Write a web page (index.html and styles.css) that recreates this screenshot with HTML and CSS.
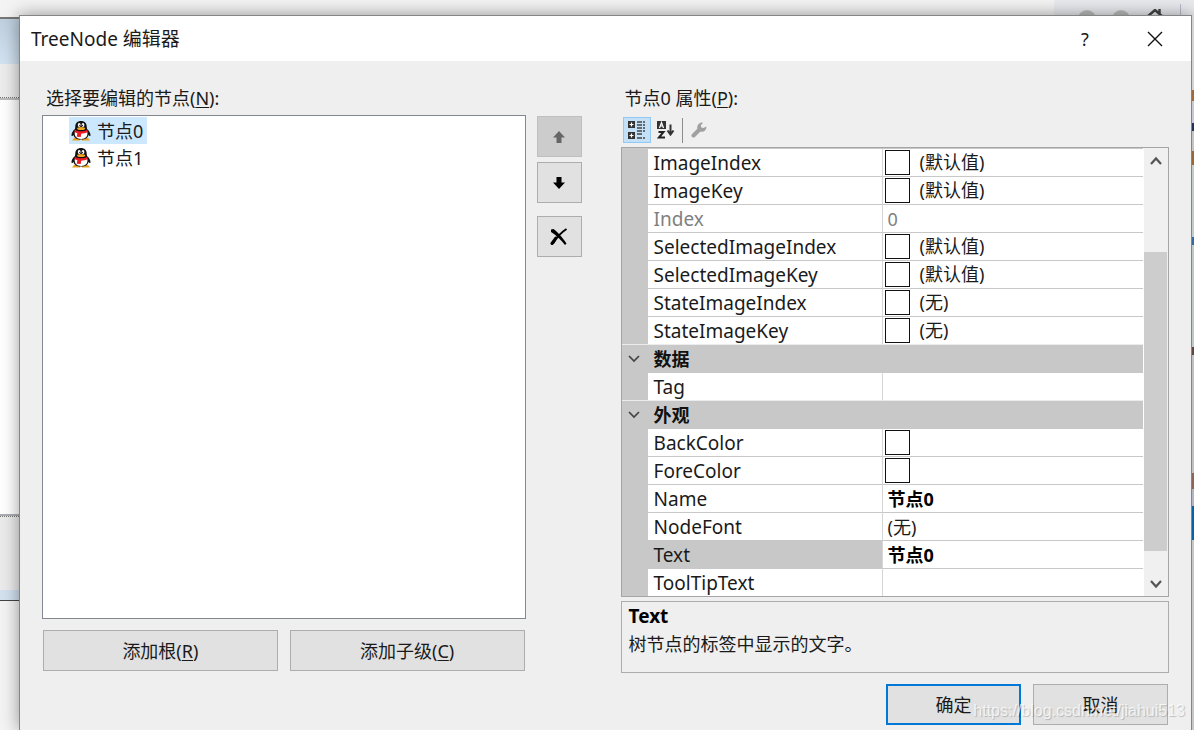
FILE: index.html
```html
<!DOCTYPE html>
<html lang="zh-CN">
<head>
<meta charset="utf-8">
<title>TreeNode 编辑器</title>
<link rel="stylesheet" href="styles.css">
</head>
<body>
<svg class="defs" aria-hidden="true">
  <symbol id="penguin" viewBox="0 0 20 20">
    <path d="M3 17 1 19.500h8v-2.500zM17 17l2 2.500h-8v-2.500z" fill="#e9a21c"/>
    <path d="M10 0C6.500 0 4.300 2.200 4.300 5.500L4 8C2 9.500.2 12 .5 14.500c.2 1 1.400.4 2.100-.6C3 17 6 18.500 10 18.500S17 17 17.400 13.900c.7 1 1.900 1.600 2.100.6.300-2.500-1.500-5-3.500-6.500L15.700 5.500C15.700 2.200 13.500 0 10 0z" fill="#111"/>
    <path d="M3.800 11h12.500c.8 4-1.500 7-6.200 7s-7-3-6.300-7z" fill="#fff"/>
    <ellipse cx="8.200" cy="4" rx="1.400" ry="2" fill="#fff"/><ellipse cx="12" cy="4" rx="1.400" ry="2" fill="#fff"/>
    <circle cx="8.700" cy="4.300" r=".6"/><circle cx="11.500" cy="4.300" r=".6"/>
    <ellipse cx="10.100" cy="7.600" rx="4" ry="1.500" fill="#f0a51e"/>
    <path d="M4 8.800c3.500 2 8.500 2 12.200 0l.6 2.200c-2 1.300-4.600 1.700-6.600 1.700l-.5 3.300-4-.2.700-3.600c-1-.2-2-.6-3-1.200z" fill="#ed1c24"/>
  </symbol>
</svg>
<div class="desktop">
  <div class="back-top">
    <div class="back-tools">
      <i class="dot"></i><i class="dot"></i>
      <svg width="18" height="10" viewBox="0 0 18 10"><path d="M1 8 9 1l8 7M13.500 4V0" fill="none" stroke="#444" stroke-width="2.500"/></svg>
      <i class="rule"></i>
    </div>
  </div>
  <div class="back-left">
    <div class="bl-title"></div>
    <div class="bl-menu"></div>
    <div class="bl-page"></div>
    <div class="bl-foot"></div>
    <div class="bl-edge"></div>
  </div>
  <main class="dialog">
    <header class="titlebar">
      <h1>TreeNode 编辑器</h1>
      <button class="caption" aria-label="帮助">?</button>
      <button class="caption" aria-label="关闭"><svg width="16" height="16" viewBox="0 0 16 16"><path d="M1 1l14 14M15 1 1 15" stroke="#111" stroke-width="1.400"/></svg></button>
    </header>
    <div class="content">
      <section class="nodes">
        <h2 class="label">选择要编辑的节点(<u>N</u>):</h2>
        <ul class="tree">
          <li><button class="node selected"><svg width="20" height="20"><use href="#penguin"/></svg>节点0</button></li>
          <li><button class="node"><svg width="20" height="20"><use href="#penguin"/></svg>节点1</button></li>
        </ul>
        <div class="add-row">
          <button class="btn">添加根(<u>R</u>)</button>
          <button class="btn">添加子级(<u>C</u>)</button>
        </div>
      </section>
      <div class="moves">
        <button class="btn square" disabled aria-label="上移"><svg width="14" height="14" viewBox="0 0 14 14"><path d="M7 1 13 7.500H9.500V13h-5V7.500H1z" fill="#666"/></svg></button>
        <button class="btn square" aria-label="下移"><svg width="14" height="14" viewBox="0 0 14 14"><path d="M7 13 1 6.500h3.500V1h5v5.500H13z" fill="#000"/></svg></button>
        <button class="btn square remove" aria-label="删除"><svg width="18" height="18" viewBox="0 0 18 18"><path d="M1 1.500 3.500 1C7 3.500 11.500 8 16.500 15.500L15 17C11 12 6 7 1 4z" fill="#000"/><path d="M16.500 1C11 4.500 6.500 9.500 3 15.500" fill="none" stroke="#000" stroke-width="2"/><path d="M6 10 2 15.500" stroke="#000" stroke-width="3" stroke-linecap="round"/></svg></button>
      </div>
      <section class="props">
        <h2 class="label">节点0 属性(<u>P</u>):</h2>
        <div class="toolbar">
          <button class="tool on" aria-label="按分类排序"><svg width="18" height="18" viewBox="0 0 18 18"><path d="M0 0h7v7H0zM0 11h7v7H0z" fill="#333"/><path d="M1.500 3.500h4M3.500 1.500v4M1.500 14.500h4M3.500 12.500v4" stroke="#fff" stroke-width="1.200"/><path d="M9 1h5M9 4h5M9 7h5M9 10h5M9 13h5M9 17h5M15 1h2M15 4h2M15 7h2M15 10h2M15 17h2" stroke="#444" stroke-width="1.400"/></svg></button>
          <button class="tool" aria-label="字母顺序"><svg width="18" height="18" viewBox="0 0 18 18"><path d="M0 0h9v8H0z" fill="#333"/><path d="M2.500 7 4.500 1.500 6.500 7M3 5h3" fill="none" stroke="#fff" stroke-width="1.200"/><path d="M1.500 11h5L2 16.500h6" fill="none" stroke="#222" stroke-width="2"/><path d="M13.500 3.500v9M10.500 9.500l3 4 3-4" fill="none" stroke="#333" stroke-width="2"/></svg></button>
          <i class="divider"></i>
          <button class="tool" aria-label="属性页"><svg width="16" height="16" viewBox="0 0 16 16"><path d="M2.500 13.500 8.500 7.500" stroke="#a0a0a0" stroke-width="4" stroke-linecap="round"/><path d="M12 .8A4.600 4.600 0 1 0 15.300 4.500L12.500 6 10.300 5.500 9.800 3.500z" fill="#a0a0a0"/></svg></button>
        </div>
        <div class="grid">
          <table>
            <colgroup><col class="c-gutter"><col class="c-name"><col></colgroup>
            <tbody>
            <tr><td class="gutter"></td><th>ImageIndex</th><td><i class="swatch"></i>(默认值)</td></tr>
            <tr><td class="gutter"></td><th>ImageKey</th><td><i class="swatch"></i>(默认值)</td></tr>
            <tr class="readonly"><td class="gutter"></td><th>Index</th><td>0</td></tr>
            <tr><td class="gutter"></td><th>SelectedImageIndex</th><td><i class="swatch"></i>(默认值)</td></tr>
            <tr><td class="gutter"></td><th>SelectedImageKey</th><td><i class="swatch"></i>(默认值)</td></tr>
            <tr><td class="gutter"></td><th>StateImageIndex</th><td><i class="swatch"></i>(无)</td></tr>
            <tr><td class="gutter"></td><th>StateImageKey</th><td><i class="swatch"></i>(无)</td></tr>
            <tr class="category"><td class="gutter"><button class="fold" aria-label="折叠数据"><svg width="12" height="8" viewBox="0 0 12 8"><path d="M1 1l5 5 5-5" fill="none" stroke="#444" stroke-width="1.700"/></svg></button></td><th colspan="2">数据</th></tr>
            <tr><td class="gutter"></td><th>Tag</th><td></td></tr>
            <tr class="category"><td class="gutter"><button class="fold" aria-label="折叠外观"><svg width="12" height="8" viewBox="0 0 12 8"><path d="M1 1l5 5 5-5" fill="none" stroke="#444" stroke-width="1.700"/></svg></button></td><th colspan="2">外观</th></tr>
            <tr><td class="gutter"></td><th>BackColor</th><td><i class="swatch"></i></td></tr>
            <tr><td class="gutter"></td><th>ForeColor</th><td><i class="swatch"></i></td></tr>
            <tr><td class="gutter"></td><th>Name</th><td><b>节点0</b></td></tr>
            <tr><td class="gutter"></td><th>NodeFont</th><td>(无)</td></tr>
            <tr class="current"><td class="gutter"></td><th>Text</th><td><b>节点0</b></td></tr>
            <tr><td class="gutter"></td><th>ToolTipText</th><td></td></tr>
            </tbody>
          </table>
          <div class="scroll">
            <button aria-label="向上滚动"><svg width="12" height="10" viewBox="0 0 12 10"><path d="M1 8l5-5.500L11 8" fill="none" stroke="#555" stroke-width="2.200"/></svg></button>
            <div class="track"><div class="thumb"></div></div>
            <button aria-label="向下滚动"><svg width="12" height="10" viewBox="0 0 12 10"><path d="M1 2l5 5.500L11 2" fill="none" stroke="#555" stroke-width="2.200"/></svg></button>
          </div>
        </div>
        <div class="help"><b>Text</b><p>树节点的标签中显示的文字。</p></div>
        <div class="confirm">
          <button class="btn primary">确定</button>
          <button class="btn">取消</button>
        </div>
      </section>
    </div>
  </main>
  <div class="back-right"></div>
  <div class="watermark">https://blog.csdn.net/jiahui513</div>
</div>
</body>
</html>
```
FILE: styles.css
```css
* { box-sizing: border-box; }
body {
  margin: 0;
  font: 18px/24px "Noto Sans", "Noto Sans CJK SC", sans-serif;
  color: #1a1a1a;
}
button { font: inherit; color: inherit; padding: 0; border: 0; background: none; }
svg { display: block; flex: none; }
h1, h2, p, ul { margin: 0; padding: 0; font-size: inherit; font-weight: 400; }
u { text-underline-offset: 2px; text-decoration-thickness: 1px; }
.defs { display: none; }

.desktop {
  position: relative;
  display: grid;
  grid-template: 15px 1fr / 19px 1fr 2px;
  min-height: 100vh;
  overflow: hidden;
}

/* windows behind the dialog */
.back-top { grid-column: 1 / -1; display: flex; justify-content: flex-end; background: #f3f3f3; }
.back-tools {
  width: 140px; padding-left: 24px; overflow: hidden;
  display: flex; gap: 16px; align-items: flex-start;
  background: #e9eaee;
}
.back-tools .dot { flex: none; width: 18px; height: 18px; margin-top: 10px; border-radius: 50%; background: #bbb; }
.back-tools svg { margin-top: 9px; }
.back-tools .rule { width: 1px; height: 11px; margin-top: 4px; background: #b8b9cc; }
.back-left { display: flex; flex-direction: column; background: #f3f3f3; padding-top: 2px; }
.bl-title { height: 47px; border-top: 2px solid #777; background: linear-gradient(#bfcfde, #d3e2f1); }
.bl-menu { height: 34px; background: #ececec; border-bottom: 1px dotted #777; }
.bl-page { height: 418px; background: #fff; border-top: 2px solid #bbb; border-bottom: 2px solid #aaadb3; }
.bl-foot { height: 74px; background: #ebebeb; border-top: 1px dotted #777; }
.bl-edge { height: 11px; background: #d3e1ef; border-bottom: 1px solid #444; }
.back-right {
  background: linear-gradient(#d4d4d4 0 75px, #a06a3c 75px 86px, #c9c9cf 86px 108px, #24305a 108px 116px, #c4c4c4 116px 136px, #99683a 136px 150px, #c4cccb 150px 222px, #356ba0 222px 230px, #bfcac8 230px 332px, #65453d 332px 340px, #c0c0c4 340px 458px, #8a6659 458px 474px, #b4b4c4 474px 491px, #0a62a5 491px 525px, #c8c8c8 525px);
}

.dialog {
  display: flex; flex-direction: column;
  border: 1px solid #858585; border-bottom: 0;
  background: #efefef;
  box-shadow: 0 0 16px rgba(0, 0, 0, .4);
}
.titlebar { display: flex; align-items: center; height: 45px; padding: 0 1px 0 11px; background: #fff; }
.titlebar h1 { flex: 1; font-size: 19px; }
.caption { width: 70px; height: 45px; display: grid; place-items: center; }

.content {
  display: grid;
  grid-template-columns: 484fr 45px 599fr;
  padding: 25px 22px 0;
}
.label { padding-left: 4px; margin-bottom: 5px; }
.nodes, .props { display: flex; flex-direction: column; }
.tree { height: 504px; padding: 1px 0 0 26px; border: 1px solid #828790; background: #fff; list-style: none; }
.node {
  display: flex; align-items: center; gap: 6px;
  height: 27px; padding: 0 4px 0 2px;
}
.node.selected { background: #cce8ff; }
.btn { display: grid; grid-auto-flow: column; place-content: center; height: 41px; border: 1px solid #adadad; background: #e1e1e1; }
.add-row { display: grid; grid-template-columns: 1fr 1fr; gap: 12px; padding: 11px 1px 0; }
.moves { display: flex; flex-direction: column; gap: 5px; padding: 30px 0 0 11px; }
.square { width: 45px; }
.square:disabled { background: #ccc; border-color: #bfbfbf; }
.remove { margin-top: 8px; }
.props { padding-left: 50px; }

.toolbar { display: flex; gap: 1px; height: 26px; padding-left: 2px; margin: 2px 0 4px; }
.tool { width: 28px; height: 26px; display: grid; place-items: center; }
.tool.on { background: #c3e0f7; border: 1px solid #90c8f6; }
.divider { width: 1px; margin: 1px 1px 0; background: #8c8c8c; }

.grid { display: flex; height: 450px; overflow: hidden; border: 1px solid #a5a5a5; background: #fff; }
table { flex: 1; table-layout: fixed; border-collapse: separate; border-spacing: 0; border-top: 1px solid #c8c8c8; }
.c-gutter { width: 26px; }
.c-name { width: 235px; }
th, td { height: 28px; padding: 0 0 0 5px; border-bottom: 1px solid #c8c8c8; line-height: 24px; white-space: nowrap; }
th { padding-left: 6px; text-align: left; font-size: 19px; font-weight: 400; border-right: 1px solid #d6d6d6; }
.gutter { padding: 0; background: #c8c8c8; }
tr:has(+ .category) > * { border-bottom-color: #ececec; }
.category th { font-size: 18px; font-weight: 700; background: #c8c8c8; border-right: 0; color: #111; }
.readonly th, .readonly td { color: #808080; }
.current th { background: #c8c8c8; }
b { color: #000; }
.swatch { display: inline-block; width: 25px; height: 25px; margin: 0 10px 0 -3px; border: 1px solid #111; vertical-align: top; background: #fff; }
.fold { display: grid; place-items: center; width: 24px; height: 26px; }
.scroll { display: flex; flex-direction: column; width: 25px; background: #f0f0f0; border-left: 1px solid #fff; }
.scroll button { height: 25px; display: grid; place-items: center; }
.track { flex: 1; padding-top: 79px; }
.thumb { height: 299px; margin-right: 1px; background: #cdcdcd; }

.help { height: 72px; margin-top: 4px; padding: 2px 7px; border: 1px solid #adadad; }
.help b { font-size: 19px; }
.help p { margin-top: 4px; }
.confirm { display: flex; justify-content: flex-end; gap: 12px; padding: 11px 1px 5px 0; }
.confirm .btn { width: 135px; }
.confirm .primary { border: 2px solid #0078d7; }

.watermark {
  position: absolute; right: 9px; bottom: 7px;
  font: 16px/24px "Liberation Sans", sans-serif;
  color: rgba(255, 255, 255, .75);
  text-shadow: 1px 1px 1px rgba(0, 0, 0, .2);
  pointer-events: none;
}
```
